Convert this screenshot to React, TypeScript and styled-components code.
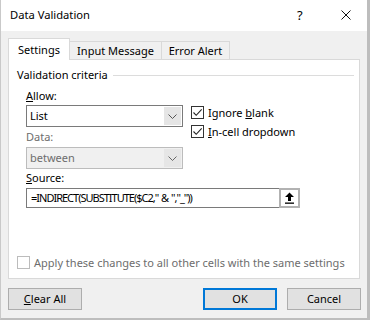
import React from "react";
import styled, { createGlobalStyle } from "styled-components";

const Global = createGlobalStyle`
  html, body { margin: 0; padding: 0; background: #ffffff; }
  * { box-sizing: border-box; }
`;

const FONT = `"Noto Sans", "Open Sans", sans-serif`;

const Window = styled.div`
  width: 370px;
  height: 320px;
  background: #f0f0f0;
  border-left: 1px solid #c9c9c9;
  border-right: 3px solid #bdbdbd;
  border-bottom: 2px solid #bdbdbd;
  display: flex;
  flex-direction: column;
  font-family: ${FONT};
  font-size: 11px;
  color: #000;
`;

const TitleBar = styled.div`
  height: 31px;
  flex: none;
  background: #ffffff;
  display: flex;
  align-items: center;
  padding-left: 9px;
`;

const Title = styled.div`
  flex: 1;
  line-height: 16px;
  margin-top: -1px;
  font-size: 11.2px;
`;

const HelpBtn = styled.div`
  width: 8px;
  font-size: 13px;
  line-height: 16px;
  margin-right: 36px;
  margin-top: -1px;
`;

const CloseBtn = styled.div`
  width: 10px;
  height: 10px;
  margin-right: 16px;
  margin-top: -1px;
  display: flex;
`;

const Body = styled.div`
  flex: 1;
  display: flex;
  flex-direction: column;
  padding: 7px 7px 0 7px;
`;

const TabRow = styled.div`
  display: flex;
  align-items: flex-end;
  height: 21px;
`;

const Tab = styled.div<{ $active?: boolean; $w: number }>`
  width: ${(p) => p.$w}px;
  height: ${(p) => (p.$active ? 22 : 18)}px;
  margin-bottom: ${(p) => (p.$active ? -1 : 0)}px;
  margin-left: ${(p) => (p.$active ? 0 : -1)}px;
  position: relative;
  z-index: ${(p) => (p.$active ? 2 : 1)};
  background: ${(p) => (p.$active ? "#ffffff" : "#f0f0f0")};
  border: 1px solid #d9d9d9;
  border-bottom: none;
  display: flex;
  justify-content: center;
  align-items: ${(p) => (p.$active ? "flex-start" : "center")};
  padding-top: ${(p) => (p.$active ? 3 : 0)}px;
  line-height: 16px;
`;

const Panel = styled.div`
  height: 220px;
  flex: none;
  background: #ffffff;
  border: 1px solid #d9d9d9;
  display: flex;
  flex-direction: column;
  padding: 7px 0 7px 8px;
`;

const GroupHeader = styled.div`
  display: flex;
  align-items: center;
  line-height: 16px;
  padding-right: 5px;
  gap: 5px;
`;

const GroupLine = styled.div`
  flex: 1;
  height: 1px;
  background: #dcdcdc;
`;

const Criteria = styled.div`
  padding-left: 9px;
  display: flex;
  flex-direction: column;
`;

const Label = styled.div<{ $mt: number; $mb: number; $disabled?: boolean }>`
  line-height: 16px;
  margin-top: ${(p) => p.$mt}px;
  margin-bottom: ${(p) => p.$mb}px;
  color: ${(p) => (p.$disabled ? "#6d6d6d" : "#000")};
`;

const SplitRow = styled.div`
  display: flex;
  gap: 8px;
`;

const LeftCol = styled.div`
  width: 157px;
  display: flex;
  flex-direction: column;
`;

const CheckCol = styled.div`
  display: flex;
  flex-direction: column;
  padding-top: 1px;
  gap: 6px;
`;

const CheckRow = styled.div<{ $disabled?: boolean }>`
  height: 13px;
  display: flex;
  align-items: center;
  gap: 4px;
  line-height: 16px;
  white-space: nowrap;
  color: ${(p) => (p.$disabled ? "#6d6d6d" : "#000")};
`;

const Box = styled.div<{ $disabled?: boolean }>`
  width: 13px;
  height: 13px;
  flex: none;
  border: 1px solid ${(p) => (p.$disabled ? "#bcbcbc" : "#333333")};
  background: #ffffff;
  display: flex;
  align-items: center;
  justify-content: center;
`;

const Select = styled.div<{ $disabled?: boolean }>`
  height: 22px;
  display: flex;
  border: 1px solid ${(p) => (p.$disabled ? "#bcbcbc" : "#7a7a7a")};
  background: ${(p) => (p.$disabled ? "#f0f0f0" : "#ffffff")};
  color: ${(p) => (p.$disabled ? "#6d6d6d" : "#000")};
`;

const SelectText = styled.div`
  flex: 1;
  padding-left: 3px;
  line-height: 19px;
`;

const DropBtn = styled.div<{ $disabled?: boolean }>`
  width: 17px;
  margin: 1px;
  background: ${(p) => (p.$disabled ? "#e6e6e6" : "#e5e5e5")};
  display: flex;
  align-items: center;
  justify-content: center;
`;

const SourceBox = styled.div`
  width: 274px;
  height: 20px;
  display: flex;
  border: 1px solid #7a7a7a;
  background: #ffffff;
`;

const SourceText = styled.div`
  flex: 1;
  padding-left: 4px;
  line-height: 17px;
  white-space: nowrap;
  overflow: hidden;
  letter-spacing: -1px;
  word-spacing: 1px;
`;

const CollapseBtn = styled.div`
  width: 21px;
  margin: -1px -1px -1px 0;
  border: 2px solid #b2b2b2;
  background: #ffffff;
  display: flex;
  align-items: center;
  justify-content: center;
`;

const ApplyRow = styled(CheckRow)`
  margin-top: auto;
  margin-bottom: 2px;
`;

const ButtonRow = styled.div`
  display: flex;
  margin-top: 9px;
  margin-right: -1px;
`;

const Button = styled.div<{ $primary?: boolean }>`
  width: 74px;
  height: 22px;
  background: #e1e1e1;
  border: ${(p) => (p.$primary ? "2px solid #0078d7" : "1px solid #adadad")};
  display: flex;
  align-items: center;
  justify-content: center;
  line-height: 16px;
`;

const Spacer = styled.div`
  flex: 1;
`;

const ButtonGap = styled.div`
  width: 10px;
`;

const Check = () => (
  <svg width="11" height="11" viewBox="0 0 11 11">
    <path d="M1.5 5.5 L4.2 8.3 L9.7 2.3" fill="none" stroke="#222" strokeWidth="1.1" />
  </svg>
);

const Chevron = ({ color }: { color: string }) => (
  <svg width="9" height="5" viewBox="0 0 9 5">
    <path d="M0.5 0.5 L4.5 4.5 L8.5 0.5" fill="none" stroke={color} strokeWidth="1" />
  </svg>
);

export default function App() {
  return (
    <>
      <Global />
      <Window>
        <TitleBar>
          <Title>Data Validation</Title>
          <HelpBtn>?</HelpBtn>
          <CloseBtn>
            <svg width="10" height="10" viewBox="0 0 10 10">
              <path d="M0.5 0.5 L9.5 9.5 M9.5 0.5 L0.5 9.5" stroke="#111" strokeWidth="1" />
            </svg>
          </CloseBtn>
        </TitleBar>
        <Body>
          <TabRow>
            <Tab $active $w={62}>Settings</Tab>
            <Tab $w={93}>Input Message</Tab>
            <Tab $w={69}>Error Alert</Tab>
          </TabRow>
          <Panel>
            <GroupHeader>
              <span>Validation criteria</span>
              <GroupLine />
            </GroupHeader>
            <Criteria>
              <Label $mt={5} $mb={1}>
                <u>A</u>llow:
              </Label>
              <SplitRow>
                <LeftCol>
                  <Select>
                    <SelectText>List</SelectText>
                    <DropBtn>
                      <Chevron color="#555" />
                    </DropBtn>
                  </Select>
                  <Label $mt={2} $mb={2} $disabled>
                    Data:
                  </Label>
                  <Select $disabled>
                    <SelectText>between</SelectText>
                    <DropBtn $disabled>
                      <Chevron color="#666" />
                    </DropBtn>
                  </Select>
                </LeftCol>
                <CheckCol>
                  <CheckRow>
                    <Box>
                      <Check />
                    </Box>
                    <span>
                      Ignore <u>b</u>lank
                    </span>
                  </CheckRow>
                  <CheckRow>
                    <Box>
                      <Check />
                    </Box>
                    <span>
                      <u>I</u>n-cell dropdown
                    </span>
                  </CheckRow>
                </CheckCol>
              </SplitRow>
              <Label $mt={1} $mb={2}>
                <u>S</u>ource:
              </Label>
              <SourceBox>
                <SourceText>=INDIRECT(SUBSTITUTE($C2," &amp; ","_"))</SourceText>
                <CollapseBtn>
                  <svg width="11" height="12" viewBox="0 0 11 12">
                    <path d="M5.5 0.5 L10 5 L7 5 L7 9 L4 9 L4 5 L1 5 Z" fill="#000" />
                    <rect x="1" y="10.5" width="9" height="1.3" fill="#000" />
                  </svg>
                </CollapseBtn>
              </SourceBox>
            </Criteria>
            <ApplyRow $disabled>
              <Box $disabled />
              <span>Apply these changes to all other cells with the same settings</span>
            </ApplyRow>
          </Panel>
          <ButtonRow>
            <Button>
              <span>
                <u>C</u>lear All
              </span>
            </Button>
            <Spacer />
            <Button $primary>OK</Button>
            <ButtonGap />
            <Button>Cancel</Button>
          </ButtonRow>
        </Body>
      </Window>
    </>
  );
}
